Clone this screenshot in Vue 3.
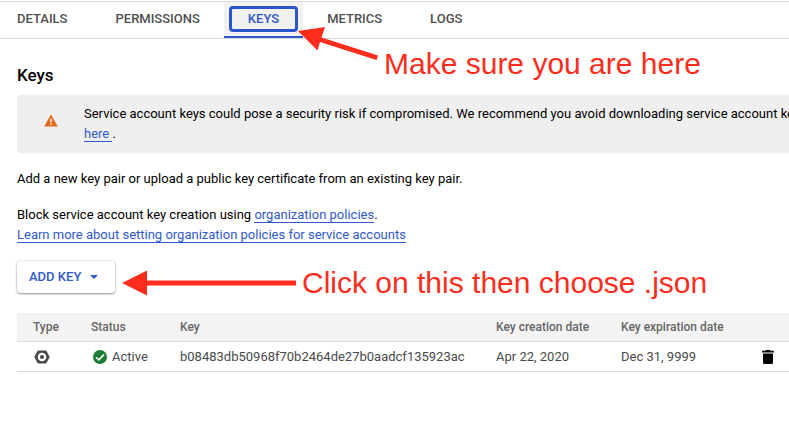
<script setup>
import { ref } from 'vue'

const tabs = ['DETAILS', 'PERMISSIONS', 'KEYS', 'METRICS', 'LOGS']
const active = ref('KEYS')
const keys = [
  {
    id: 'b08483db50968f70b2464de27b0aadcf135923ac',
    status: 'Active',
    created: 'Apr 22, 2020',
    expires: 'Dec 31, 9999',
  },
]
</script>

<template>
  <div class="page">
    <nav class="tabs">
      <button
        v-for="tab in tabs"
        :key="tab"
        type="button"
        class="tab"
        :class="{ active: tab === active }"
        @click="active = tab"
      >
        <span class="tab-label">{{ tab }}</span>
      </button>
    </nav>

    <main class="content">
      <h1 class="title">Keys</h1>

      <section class="notice">
        <svg class="warning" viewBox="0 0 14 13" aria-hidden="true">
          <path d="M7 0.6 13.8 12.5H0.2Z" fill="#e06a1a" />
          <path d="M7 4.8v3.6M7 9.4v1.5" stroke="#fff" stroke-width="1.4" fill="none" />
        </svg>
        <p class="notice-text">
          Service account keys could pose a security risk if compromised. We recommend you avoid downloading service account keys<br />
          <a class="link" href="#">here&nbsp;</a>.
        </p>
      </section>

      <p class="intro">Add a new key pair or upload a public key certificate from an existing key pair.</p>
      <p class="policy">
        Block service account key creation using <a class="link" href="#">organization policies</a>.<br />
        <a class="link" href="#">Learn more about setting organization policies for service accounts</a>
      </p>

      <button type="button" class="add">
        ADD KEY
        <svg class="caret" viewBox="0 0 8 4" aria-hidden="true"><path d="M0 0h8L4 4z" fill="currentColor" /></svg>
      </button>

      <table class="keys">
        <colgroup>
          <col class="c-type" /><col class="c-status" /><col class="c-key" />
          <col class="c-date" /><col class="c-date" /><col />
        </colgroup>
        <thead>
          <tr>
            <th>Type</th>
            <th>Status</th>
            <th>Key</th>
            <th>Key creation date</th>
            <th>Key expiration date</th>
            <th></th>
          </tr>
        </thead>
        <tbody>
          <tr v-for="key in keys" :key="key.id">
            <td>
              <svg class="type-icon" viewBox="0 0 18 16" aria-hidden="true">
                <path d="M5.5 2.3h7L15.7 8l-3.2 5.7h-7L2.3 8z" fill="#4a4a4a" stroke="#4a4a4a" stroke-width="1.8" stroke-linejoin="round" />
                <circle cx="9" cy="8" r="4.3" fill="#fff" />
                <circle cx="9" cy="8" r="2.1" fill="#4a4a4a" />
              </svg>
            </td>
            <td>
              <span class="status">
                <svg class="check" viewBox="0 0 14 14" aria-hidden="true">
                  <circle cx="7" cy="7" r="7" fill="#1c7c36" />
                  <path d="m3 7.2 2.7 2.7L11 4.6" fill="none" stroke="#fff" stroke-width="1.5" />
                </svg>
                {{ key.status }}
              </span>
            </td>
            <td>{{ key.id }}</td>
            <td>{{ key.created }}</td>
            <td>{{ key.expires }}</td>
            <td class="actions">
              <button type="button" class="delete" aria-label="Delete key">
                <svg viewBox="0 0 12 14" aria-hidden="true">
                  <path d="M0 0.8h3.2L4 0h4l0.8 0.8H12v1.6H0zM1 3.5h10v9Q11 14 9.5 14h-7Q1 14 1 12.500z" fill="#000" />
                </svg>
              </button>
            </td>
          </tr>
        </tbody>
      </table>
    </main>

    <div class="note note-tab">
      <svg class="arrow-tab" viewBox="0 0 80 34" aria-hidden="true">
        <path d="M0 4 27 0 23.500 10.500 80 28.500 78.500 33 22 15 19.500 23.500z" fill="#fc2d1c" />
      </svg>
      <span>Make sure you are here</span>
    </div>
    <div class="note note-add">
      <svg class="arrow-add" viewBox="0 0 174 26" aria-hidden="true">
        <path d="M0 13 25 0.500V10.500H174V15.500H25V25.500z" fill="#fc2d1c" />
      </svg>
      <span>Click on this then choose .json</span>
    </div>
  </div>
</template>

<style>
body {
  background: #fff;
}
</style>

<style scoped>
.page {
  position: relative;
  overflow: hidden;
  padding-top: 1px;
  padding-bottom: 24px;
  font-family: Roboto, "Liberation Sans", sans-serif;
  font-size: 13px;
  line-height: 20px;
  color: #000;
}
button {
  font: inherit;
  border: 0;
  cursor: pointer;
}
.tabs {
  display: flex;
  height: 36px;
  border-top: 1px solid #d9d9d9;
  border-bottom: 1px solid #d9d9d9;
}
.tab {
  padding: 0 19px;
  background: none;
  border-bottom: 2px solid transparent;
  color: #4f4f4f;
  font-size: 13px;
  font-weight: 500;
  line-height: 20px;
}
.tab:first-child {
  padding-left: 12px;
}
.tab-label {
  display: block;
  padding: 0 5px;
}
.tab.active {
  padding: 0 5px;
  background: #f1f1f1;
  border-bottom-color: #2a56c6;
  color: #3059cc;
}
.tab.active .tab-label {
  padding: 0 16px;
  border: 3px solid #2a56cc;
  border-radius: 4px;
}
.content {
  padding-left: 17px;
}
.title {
  margin: 0;
  padding: 24px 0 8px;
  font-size: 17px;
  font-weight: 500;
  line-height: 24px;
}
.notice {
  display: flex;
  align-items: center;
  gap: 26px;
  padding: 9px 0 9px 27px;
  background: #efefef;
  border-radius: 4px 0 0 4px;
}
.warning {
  flex: none;
  width: 14px;
  height: 13px;
  margin-bottom: 8px;
}
.notice-text {
  margin: 0;
  white-space: nowrap;
}
.link {
  color: #3059cc;
  text-decoration: none;
  border-bottom: 1px solid #3059cc;
}
.intro {
  margin: 16px 0;
}
.policy {
  margin: 0 0 16px;
}
.add {
  display: flex;
  align-items: center;
  gap: 9px;
  height: 32px;
  padding: 0 17px 0 12px;
  background: #fff;
  border-radius: 4px;
  box-shadow: 0 1px 2px rgba(0, 0, 0, 0.4), 0 0 3px rgba(0, 0, 0, 0.15);
  color: #3059cc;
  font-weight: 500;
}
.caret {
  width: 8px;
  height: 4px;
}
.keys {
  width: 100%;
  margin-top: 20px;
  border-collapse: separate;
  border-spacing: 0;
  table-layout: fixed;
}
.c-type {
  width: 58px;
}
.c-status {
  width: 89px;
}
.c-key {
  width: 316px;
}
.c-date {
  width: 125px;
}
th,
td {
  height: 28px;
  padding: 0 0 0 16px;
  border-bottom: 1px solid #dcdcdc;
  text-align: left;
  white-space: nowrap;
  color: #4a4a4a;
}
td {
  height: 29px;
}
th {
  background: #f3f3f3;
  color: #666;
  font-size: 12px;
  font-weight: 500;
}
.type-icon {
  display: block;
  width: 18px;
  height: 16px;
}
.status {
  display: flex;
  align-items: center;
  gap: 5px;
  padding-left: 2px;
}
.check {
  width: 14px;
  height: 14px;
}
.actions {
  padding: 0 15px 0 0;
}
.delete {
  display: block;
  width: 12px;
  height: 14px;
  margin-left: auto;
  padding: 0;
  background: none;
}
.delete svg {
  display: block;
  width: 12px;
  height: 14px;
}
.note {
  position: absolute;
  display: flex;
  gap: 6px;
  pointer-events: none;
  white-space: nowrap;
  color: #fc2d1c;
  font-family: "Liberation Sans", Arial, sans-serif;
  font-size: 30px;
  line-height: 36px;
}
.note-tab {
  top: 27px;
  left: 298px;
}
.note-tab span {
  padding-top: 19px;
}
.arrow-tab {
  width: 80px;
  height: 34px;
}
.note-add {
  top: 265px;
  left: 122px;
  align-items: center;
}
.arrow-add {
  width: 174px;
  height: 26px;
}
</style>
